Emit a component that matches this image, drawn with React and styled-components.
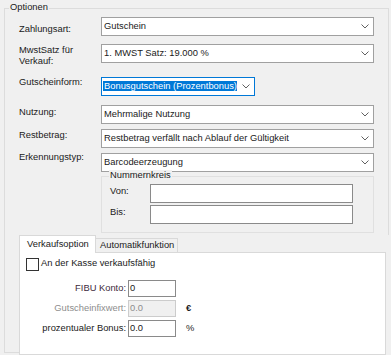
import React from 'react';
import styled, { createGlobalStyle } from 'styled-components';

const Global = createGlobalStyle`
  html, body { margin: 0; padding: 0; background: #f0f0f0; }
  body {
    font-family: "Liberation Sans", Arial, sans-serif;
    font-size: 9.35px;
    color: #1a1a1a;
  }
  * { box-sizing: border-box; }
`;

const Window = styled.div`
  width: 391px;
  height: 355px;
  overflow: hidden;
  padding-top: 8px;
  background: #f0f0f0;
`;

const GroupBox = styled.div`
  position: relative;
  margin: 0 2px 0 4px;
  height: 345px;
  border: 1px solid #dcdcdc;
  padding: 8px 14px 0 14px;
`;

const Caption = styled.span`
  position: absolute;
  top: ${(p) => p.$top}px;
  left: ${(p) => p.$left}px;
  padding: 0 1px;
  background: #f0f0f0;
  line-height: 11px;
  white-space: nowrap;
`;

const Row = styled.div`
  display: flex;
  align-items: flex-start;
  margin-top: ${(p) => p.$mt || 0}px;
`;

const Label = styled.div`
  width: 82px;
  flex: none;
  line-height: 11px;
  margin-top: ${(p) => p.$dy || 0}px;
  white-space: pre-line;
`;

const Combo = styled.div`
  flex: ${(p) => (p.$width ? 'none' : '1')};
  width: ${(p) => (p.$width ? `${p.$width}px` : 'auto')};
  height: 19px;
  display: flex;
  align-items: center;
  background: #fff;
  border: 1px solid ${(p) => (p.$focused ? '#0078d7' : '#a0a0a0')};
  padding-left: ${(p) => (p.$focused ? 1 : 2)}px;
  line-height: 11px;
  white-space: nowrap;
  overflow: hidden;
`;

const ComboText = styled.span`
  flex: 1;
  overflow: hidden;
`;

const Selection = styled.span`
  background: #0078d7;
  color: #fff;
  line-height: 13px;
  padding: 0 1px;
`;

const Arrow = styled.span`
  width: 17px;
  flex: none;
  display: flex;
  align-items: center;
  justify-content: center;
`;

const SubGroup = styled.div`
  position: relative;
  margin: 4px 0 0 82px;
  height: 57px;
  border: 1px solid #e0e0e0;
  padding: 7px 20px 0 8px;
`;

const SubRow = styled.div`
  display: flex;
  align-items: flex-start;
  margin-top: ${(p) => p.$mt || 0}px;
`;

const SubLabel = styled.div`
  width: 40px;
  flex: none;
  line-height: 11px;
  margin-top: 2px;
`;

const TextBox = styled.div`
  width: ${(p) => (p.$width ? `${p.$width}px` : 'auto')};
  flex: ${(p) => (p.$width ? 'none' : '1')};
  height: ${(p) => p.$height || 19}px;
  display: flex;
  align-items: center;
  padding-left: 1px;
  line-height: 11px;
  background: ${(p) => (p.$disabled ? '#f0f0f0' : '#fff')};
  border: 1px solid ${(p) => (p.$disabled ? '#cccccc' : '#8a8a8a')};
  color: ${(p) => (p.$disabled ? '#8d8d8d' : '#1a1a1a')};
`;

const TabWrap = styled.div`
  position: relative;
  margin: 2px -15px 0 0;
  padding-right: 3px;
  background: #f0f0f0;
`;

const TabStrip = styled.div`
  display: flex;
  align-items: flex-start;
  height: 17px;
`;

const Tab = styled.div`
  position: relative;
  z-index: ${(p) => (p.$active ? 2 : 1)};
  width: ${(p) => p.$width}px;
  height: ${(p) => (p.$active ? 18 : 14)}px;
  margin-top: ${(p) => (p.$active ? 0 : 3)}px;
  margin-left: ${(p) => (p.$active ? 0 : -1)}px;
  background: ${(p) => (p.$active ? '#fff' : '#f0f0f0')};
  border: 1px solid #d9d9d9;
  border-bottom: none;
  padding: ${(p) => (p.$active ? '3px 0 0 7px' : '1px 0 0 4px')};
  line-height: 11px;
  white-space: nowrap;
`;

const TabPanel = styled.div`
  position: relative;
  z-index: 1;
  height: 103px;
  background: #fff;
  border: 1px solid #d9d9d9;
  padding: 5px 0 0 6px;
`;

const CheckRow = styled.label`
  display: flex;
  align-items: flex-start;
  gap: 2px;
  line-height: 11px;
`;

const CheckBox = styled.span`
  width: 13px;
  height: 13px;
  flex: none;
  border: 1px solid #333;
  background: #fff;
`;

const FormGrid = styled.div`
  display: grid;
  grid-template-columns: 100px 48px auto;
  grid-auto-rows: 17px;
  row-gap: 3px;
  column-gap: 2px;
  margin-top: 9px;
  align-items: center;
`;

const FormLabel = styled.div`
  text-align: right;
  line-height: 11px;
  white-space: nowrap;
  color: ${(p) => p.$color || '#1a1a1a'};
`;

const Unit = styled.div`
  padding-left: 8px;
  line-height: 11px;
  font-weight: ${(p) => (p.$bold ? 700 : 400)};
`;

const Chevron = () => (
  <svg width="8" height="5" viewBox="0 0 8 5" aria-hidden="true">
    <polyline points="0.5,0.5 4,4 7.5,0.5" fill="none" stroke="#606060" strokeWidth="1" />
  </svg>
);

const ComboBox = ({ children, width, focused }) => (
  <Combo $width={width} $focused={focused}>
    <ComboText>{focused ? <Selection>{children}</Selection> : children}</ComboText>
    <Arrow>
      <Chevron />
    </Arrow>
  </Combo>
);

export default function App() {
  return (
    <>
      <Global />
      <Window>
        <GroupBox>
          <Caption $top={-7} $left={4}>Optionen</Caption>

          <Row>
            <Label $dy={7}>Zahlungsart:</Label>
            <ComboBox>Gutschein</ComboBox>
          </Row>
          <Row $mt={8}>
            <Label $dy={1}>{'MwstSatz für\nVerkauf:'}</Label>
            <ComboBox>1. MWST Satz: 19.000 %</ComboBox>
          </Row>
          <Row $mt={10}>
            <Label $dy={0}>Gutscheinform:</Label>
            <ComboBox width={154} focused>
              Bonusgutschein (Prozentbonus)
            </ComboBox>
          </Row>
          <Row $mt={9}>
            <Label $dy={2}>Nutzung:</Label>
            <ComboBox>Mehrmalige Nutzung</ComboBox>
          </Row>
          <Row $mt={5}>
            <Label $dy={1}>Restbetrag:</Label>
            <ComboBox>Restbetrag verfällt nach Ablauf der Gültigkeit</ComboBox>
          </Row>
          <Row $mt={5}>
            <Label $dy={-1}>Erkennungstyp:</Label>
            <ComboBox>Barcodeerzeugung</ComboBox>
          </Row>

          <SubGroup>
            <Caption $top={-7} $left={7}>Nummernkreis</Caption>
            <SubRow>
              <SubLabel>Von:</SubLabel>
              <TextBox />
            </SubRow>
            <SubRow $mt={2}>
              <SubLabel>Bis:</SubLabel>
              <TextBox />
            </SubRow>
          </SubGroup>

          <TabWrap>
            <TabStrip>
              <Tab $active $width={77}>Verkaufsoption</Tab>
              <Tab $width={83}>Automatikfunktion</Tab>
            </TabStrip>
            <TabPanel>
              <CheckRow>
                <CheckBox />
                <span>An der Kasse verkaufsfähig</span>
              </CheckRow>
              <FormGrid>
                <FormLabel $color="#3d2a3c">FIBU Konto:</FormLabel>
                <TextBox $width={48} $height={17}>0</TextBox>
                <span />
                <FormLabel $color="#8d8d8d">Gutscheinfixwert:</FormLabel>
                <TextBox $width={48} $height={17} $disabled>0.0</TextBox>
                <Unit $bold>€</Unit>
                <FormLabel>prozentualer Bonus:</FormLabel>
                <TextBox $width={48} $height={17}>0.0</TextBox>
                <Unit>%</Unit>
              </FormGrid>
            </TabPanel>
          </TabWrap>
        </GroupBox>
      </Window>
    </>
  );
}
